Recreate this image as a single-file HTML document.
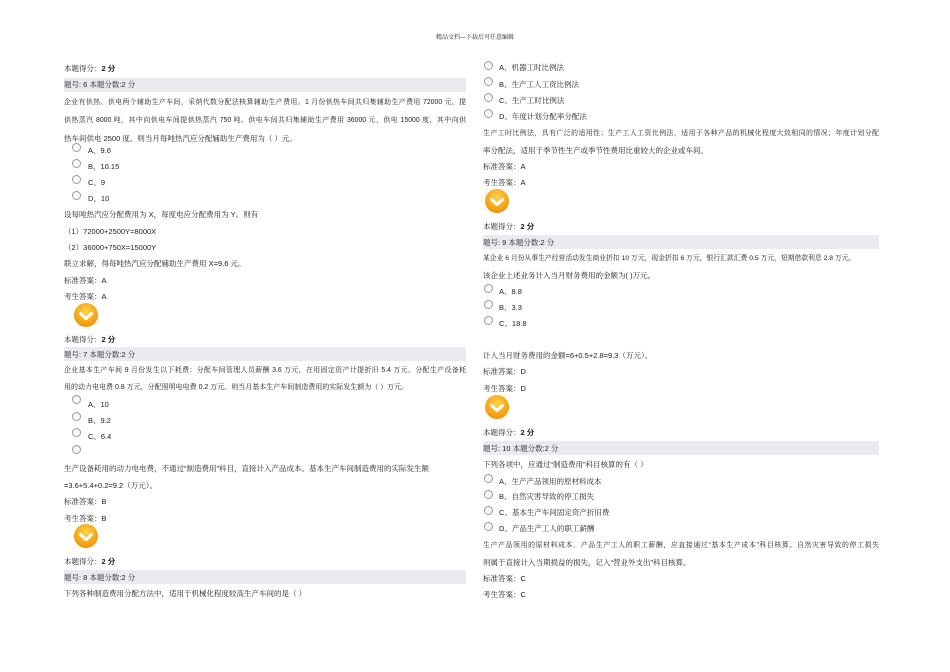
<!DOCTYPE html>
<html><head><meta charset="utf-8"><style>
body{margin:0;width:950px;height:672px;background:#fff;position:relative;overflow:hidden;font-family:"Liberation Sans","Noto Serif CJK SC",serif;color:#222}
.t{position:absolute;font-size:7.5px;line-height:8px;white-space:nowrap}
.j{text-align:justify;text-align-last:justify;font-size:6.9px}
.s{font-size:7px}
.L{left:64px}.R{left:483px}
.Lw{width:402px}.Rw{width:396px}
.bar{position:absolute;height:14px;background:#e9ebef}
.r{position:absolute;width:7px;height:7px;border:1px solid #999;border-radius:50%;background:linear-gradient(#f4f4f4,#fff)}
.ok{position:absolute;width:24px;height:24px;border-radius:50%;background:radial-gradient(circle at 50% 35%,#ffd24a,#f39a0c 70%,#e07a00)}
.ok svg{position:absolute;left:0;top:0}
b{font-weight:bold;font-family:"Liberation Sans","Noto Sans CJK SC",sans-serif}
</style></head><body>
<div class="t" style="left:0;width:950px;text-align:center;top:34px;font-size:6px">精品文档---下载后可任意编辑</div>

<div class="t L" style="top:65px">本题得分：<b>2 分</b></div>
<div class="bar" style="left:64px;width:402px;top:78px"></div>
<div class="t L" style="top:81px">题号: 6 本题分数:2 分</div>
<div class="t L Lw j" style="top:99px">企业有供热、供电两个辅助生产车间，采纳代数分配法核算辅助生产费用。1 月份供热车间共归集辅助生产费用 72000 元，提</div>
<div class="t L Lw j" style="top:117px">供热蒸汽 8000 吨，其中向供电车间提供热蒸汽 750 吨。供电车间共归集辅助生产费用 36000 元，供电 15000 度，其中向供</div>
<div class="t L" style="top:135px">热车间供电 2500 度。则当月每吨热汽应分配辅助生产费用为（ ）元。</div>
<div class="r" style="left:72px;top:143px"></div><div class="t" style="left:88px;top:147px">A、9.6</div>
<div class="r" style="left:72px;top:159px"></div><div class="t" style="left:88px;top:163px">B、10.15</div>
<div class="r" style="left:72px;top:175px"></div><div class="t" style="left:88px;top:179px">C、9</div>
<div class="r" style="left:72px;top:191px"></div><div class="t" style="left:88px;top:195px">D、10</div>
<div class="t L" style="top:211px">设每吨热汽应分配费用为 X，每度电应分配费用为 Y。则有</div>
<div class="t L" style="top:228px">（1）72000+2500Y=8000X</div>
<div class="t L" style="top:244px">（2）36000+750X=15000Y</div>
<div class="t L" style="top:260px">联立求解，得每吨热汽应分配辅助生产费用 X=9.6 元。</div>
<div class="t L" style="top:277px">标准答案：A</div>
<div class="t L" style="top:293px">考生答案：A</div>
<div class="ok" style="left:74px;top:303px"><svg width="24" height="24"><path d="M6.5 10.5 L12 15.5 L17.5 10.5" fill="none" stroke="#fff" stroke-width="3" stroke-linecap="round" stroke-linejoin="round"/></svg></div>
<div class="t L" style="top:336px">本题得分：<b>2 分</b></div>
<div class="bar" style="left:64px;width:402px;top:347px"></div>
<div class="t L" style="top:351px">题号: 7 本题分数:2 分</div>
<div class="t L Lw j" style="top:367px">企业基本生产车间 9 月份发生以下耗费：分配车间管理人员薪酬 3.6 万元，在用固定资产计提折旧 5.4 万元，分配生产设备耗</div>
<div class="t L s" style="top:384px">用的动力电电费 0.8 万元，分配照明电电费 0.2 万元。则当月基本生产车间制造费用的实际发生额为（ ）万元。</div>
<div class="r" style="left:72px;top:395px"></div><div class="t" style="left:88px;top:401px">A、10</div>
<div class="r" style="left:72px;top:412px"></div><div class="t" style="left:88px;top:417px">B、9.2</div>
<div class="r" style="left:72px;top:428px"></div><div class="t" style="left:88px;top:433px">C、6.4</div>
<div class="r" style="left:72px;top:445px"></div>
<div class="t L" style="top:465px">生产设备耗用的动力电电费，不通过“制造费用”科目，直接计入产品成本。基本生产车间制造费用的实际发生额</div>
<div class="t L" style="top:482px">=3.6+5.4+0.2=9.2（万元）。</div>
<div class="t L" style="top:498px">标准答案：B</div>
<div class="t L" style="top:515px">考生答案：B</div>
<div class="ok" style="left:74px;top:524px"><svg width="24" height="24"><path d="M6.5 10.5 L12 15.5 L17.5 10.5" fill="none" stroke="#fff" stroke-width="3" stroke-linecap="round" stroke-linejoin="round"/></svg></div>
<div class="t L" style="top:558px">本题得分：<b>2 分</b></div>
<div class="bar" style="left:64px;width:402px;top:570px"></div>
<div class="t L" style="top:574px">题号: 8 本题分数:2 分</div>
<div class="t L" style="top:590px">下列各种制造费用分配方法中，适用于机械化程度较高生产车间的是（ ）</div>

<div class="r" style="left:484px;top:61px"></div><div class="t" style="left:499px;top:64px">A、机器工时比例法</div>
<div class="r" style="left:484px;top:77px"></div><div class="t" style="left:499px;top:81px">B、生产工人工资比例法</div>
<div class="r" style="left:484px;top:93px"></div><div class="t" style="left:499px;top:97px">C、生产工时比例法</div>
<div class="r" style="left:484px;top:109px"></div><div class="t" style="left:499px;top:113px">D、年度计划分配率分配法</div>
<div class="t R Rw j" style="top:130px">生产工时比例法，具有广泛的适用性；生产工人工资比例法，适用于各种产品的机械化程度大致相同的情况；年度计划分配</div>
<div class="t R" style="top:147px">率分配法，适用于季节性生产或季节性费用比重较大的企业或车间。</div>
<div class="t R" style="top:163px">标准答案：A</div>
<div class="t R" style="top:179px">考生答案：A</div>
<div class="ok" style="left:485px;top:189px"><svg width="24" height="24"><path d="M6.5 10.5 L12 15.5 L17.5 10.5" fill="none" stroke="#fff" stroke-width="3" stroke-linecap="round" stroke-linejoin="round"/></svg></div>
<div class="t R" style="top:223px">本题得分：<b>2 分</b></div>
<div class="bar" style="left:483px;width:396px;top:235px"></div>
<div class="t R" style="top:239px">题号: 9 本题分数:2 分</div>
<div class="t R s" style="top:255px;font-size:6.8px">某企业 6 月份从事生产经营活动发生商业折扣 10 万元，现金折扣 6 万元，银行汇款汇费 0.5 万元，短期借款利息 2.8 万元。</div>
<div class="t R" style="top:272px">该企业上述业务计入当月财务费用的金额为( )万元。</div>
<div class="r" style="left:484px;top:284px"></div><div class="t" style="left:499px;top:288px">A、8.8</div>
<div class="r" style="left:484px;top:300px"></div><div class="t" style="left:499px;top:304px">B、3.3</div>
<div class="r" style="left:484px;top:316px"></div><div class="t" style="left:499px;top:320px">C、18.8</div>
<div class="t R" style="top:352px">计入当月财务费用的金额=6+0.5+2.8=9.3（万元）。</div>
<div class="t R" style="top:368px">标准答案：D</div>
<div class="t R" style="top:385px">考生答案：D</div>
<div class="ok" style="left:485px;top:395px"><svg width="24" height="24"><path d="M6.5 10.5 L12 15.5 L17.5 10.5" fill="none" stroke="#fff" stroke-width="3" stroke-linecap="round" stroke-linejoin="round"/></svg></div>
<div class="t R" style="top:429px">本题得分：<b>2 分</b></div>
<div class="bar" style="left:483px;width:396px;top:441px"></div>
<div class="t R" style="top:445px">题号: 10 本题分数:2 分</div>
<div class="t R" style="top:461px">下列各项中，应通过“制造费用”科目核算的有（ ）</div>
<div class="r" style="left:484px;top:474px"></div><div class="t" style="left:499px;top:478px">A、生产产品领用的原材料成本</div>
<div class="r" style="left:484px;top:490px"></div><div class="t" style="left:499px;top:493px">B、自然灾害导致的停工损失</div>
<div class="r" style="left:484px;top:506px"></div><div class="t" style="left:499px;top:509px">C、基本生产车间固定资产折旧费</div>
<div class="r" style="left:484px;top:522px"></div><div class="t" style="left:499px;top:525px">D、产品生产工人的职工薪酬</div>
<div class="t R Rw j" style="top:542px">生产产品领用的原材料成本、产品生产工人的职工薪酬，应直接通过“基本生产成本”科目核算。自然灾害导致的停工损失</div>
<div class="t R" style="top:559px">则属于直接计入当期损益的损失，记入“营业外支出”科目核算。</div>
<div class="t R" style="top:575px">标准答案：C</div>
<div class="t R" style="top:591px">考生答案：C</div>
</body></html>
